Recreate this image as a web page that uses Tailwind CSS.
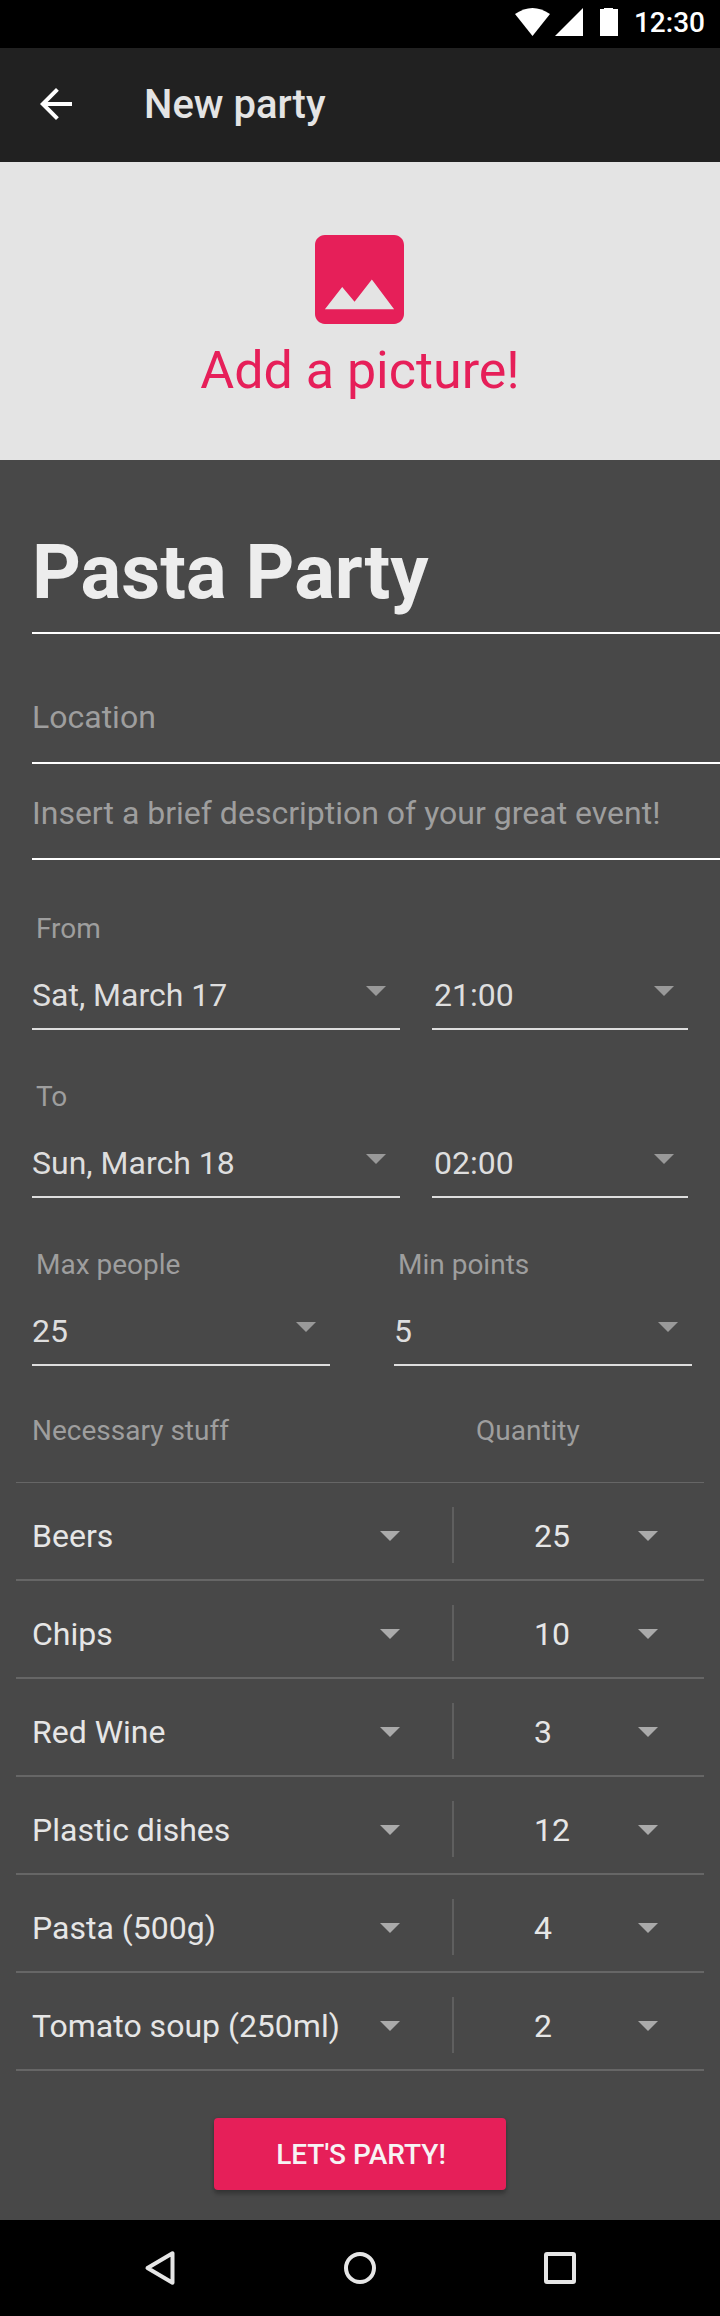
<!DOCTYPE html>
<html lang="en">
<head>
<meta charset="utf-8">
<title>New party</title>
<script src="https://cdn.jsdelivr.net/npm/@tailwindcss/browser@4"></script>
</head>
<body class="w-[720px] bg-[#484848] font-['Roboto',sans-serif] text-[32px] leading-8 text-[#e6e6e6]">
<svg class="hidden"><symbol id="caret" viewBox="0 0 20 10"><path d="M0 0H20L10 10Z" fill="currentColor"/></symbol></svg>

<div class="flex h-12 items-start justify-end bg-black pr-[15px] text-white">
  <svg class="mr-px h-12 w-[118px]" viewBox="0 0 118 48" fill="currentColor"><path d="M0 14Q17.500 2 35 14L17.500 36Z"/><path d="M68 8V36H40Z"/><path d="M85 9H89V8H98V9H103V36H85Z"/></svg>
  <span class="mt-[9px] text-[28px] leading-7 font-medium">12:30</span>
</div>

<header class="flex h-[114px] items-center bg-[#212121] pb-[2px] pl-8">
  <svg class="size-12" viewBox="0 0 24 24" fill="#fff"><path d="M20 11H7.830l5.590-5.590L12 4l-8 8 8 8 1.410-1.410L7.830 13H20v-2z"/></svg>
  <h1 class="mt-[2px] ml-16 text-[40px] leading-10 font-medium text-[#e4e4e4]">New party</h1>
</header>

<section class="flex h-[298px] flex-col items-center bg-[#e4e4e4] pt-[73px] text-[#e61f59]">
  <svg class="mr-px size-[89px]" viewBox="3 3 18 18" fill="currentColor"><path d="M21 19V5c0-1.100-.9-2-2-2H5c-1.100 0-2 .9-2 2v14c0 1.100.9 2 2 2h14c1.100 0 2-.9 2-2zM8.500 13.500l2.500 3.010L14.500 12l4.500 6H5l3.500-4.500z"/></svg>
  <p class="mt-[21px] text-[52px] leading-[52px]">Add a picture!</p>
</section>

<main>
  <div class="ml-8 flex h-[174px] items-end border-b-2 border-white pb-[22px] text-[76px] leading-[76px] font-bold text-[#ededed]">Pasta Party</div>
  <div class="ml-8 flex h-[130px] items-end border-b-2 border-white pb-[29px] text-[#9e9e9e]">Location</div>
  <div class="ml-8 flex h-24 items-end border-b-2 border-white pb-[29px] text-[#9e9e9e]">Insert a brief description of your great event!</div>

  <div class="h-[170px] px-8 pt-[55px]">
    <div class="pl-1 text-[28px] leading-7 text-[#9e9e9e]">From</div>
    <div class="flex h-[87px] gap-8 text-[#dedede]">
      <div class="flex w-[368px] items-end justify-between border-b-2 border-[#dedede] pr-[14px] pb-[17px]">Sat, March 17<svg class="mb-[15px] h-[10px] w-5 text-[#999]"><use href="#caret"/></svg></div>
      <div class="flex w-[256px] items-end justify-between border-b-2 border-[#dedede] pr-[14px] pb-[17px] pl-[2px]">21:00<svg class="mb-[15px] h-[10px] w-5 text-[#999]"><use href="#caret"/></svg></div>
    </div>
  </div>

  <div class="h-[168px] px-8 pt-[53px]">
    <div class="pl-1 text-[28px] leading-7 text-[#9e9e9e]">To</div>
    <div class="flex h-[87px] gap-8 text-[#dedede]">
      <div class="flex w-[368px] items-end justify-between border-b-2 border-[#dedede] pr-[14px] pb-[17px]">Sun, March 18<svg class="mb-[15px] h-[10px] w-5 text-[#999]"><use href="#caret"/></svg></div>
      <div class="flex w-[256px] items-end justify-between border-b-2 border-[#dedede] pr-[14px] pb-[17px] pl-[2px]">02:00<svg class="mb-[15px] h-[10px] w-5 text-[#999]"><use href="#caret"/></svg></div>
    </div>
  </div>

  <div class="flex h-[168px] gap-16 pt-[53px] pl-8">
    <div class="w-[298px]">
      <div class="pl-1 text-[28px] leading-7 text-[#9e9e9e]">Max people</div>
      <div class="flex h-[87px] items-end justify-between border-b-2 border-[#dedede] pr-[14px] pb-[17px] text-[#dedede]">25<svg class="mb-[15px] h-[10px] w-5 text-[#999]"><use href="#caret"/></svg></div>
    </div>
    <div class="w-[298px]">
      <div class="pl-1 text-[28px] leading-7 text-[#9e9e9e]">Min points</div>
      <div class="flex h-[87px] items-end justify-between border-b-2 border-[#dedede] pr-[14px] pb-[17px] text-[#dedede]">5<svg class="mb-[15px] h-[10px] w-5 text-[#999]"><use href="#caret"/></svg></div>
    </div>
  </div>

  <div class="mx-4">
    <div class="flex h-[117px] border-b border-[#666] pt-[51px] pl-4 text-[28px] leading-7 text-[#9e9e9e]"><span class="w-[444px]">Necessary stuff</span><span>Quantity</span></div>

    <div class="flex h-[98px] items-center border-b-2 border-[#666] pt-[10px] pl-4">
      <span class="w-[348px]">Beers</span><svg class="h-[10px] w-5 text-[#aaa]"><use href="#caret"/></svg>
      <i class="mb-[2px] ml-[52px] h-14 w-[2px] bg-[#5f5f5f]"></i>
      <span class="ml-[80px] w-[104px]">25</span><svg class="h-[10px] w-5 text-[#aaa]"><use href="#caret"/></svg>
    </div>
    <div class="flex h-[98px] items-center border-b-2 border-[#666] pt-[10px] pl-4">
      <span class="w-[348px]">Chips</span><svg class="h-[10px] w-5 text-[#aaa]"><use href="#caret"/></svg>
      <i class="mb-[2px] ml-[52px] h-14 w-[2px] bg-[#5f5f5f]"></i>
      <span class="ml-[80px] w-[104px]">10</span><svg class="h-[10px] w-5 text-[#aaa]"><use href="#caret"/></svg>
    </div>
    <div class="flex h-[98px] items-center border-b-2 border-[#666] pt-[10px] pl-4">
      <span class="w-[348px]">Red Wine</span><svg class="h-[10px] w-5 text-[#aaa]"><use href="#caret"/></svg>
      <i class="mb-[2px] ml-[52px] h-14 w-[2px] bg-[#5f5f5f]"></i>
      <span class="ml-[80px] w-[104px]">3</span><svg class="h-[10px] w-5 text-[#aaa]"><use href="#caret"/></svg>
    </div>
    <div class="flex h-[98px] items-center border-b-2 border-[#666] pt-[10px] pl-4">
      <span class="w-[348px]">Plastic dishes</span><svg class="h-[10px] w-5 text-[#aaa]"><use href="#caret"/></svg>
      <i class="mb-[2px] ml-[52px] h-14 w-[2px] bg-[#5f5f5f]"></i>
      <span class="ml-[80px] w-[104px]">12</span><svg class="h-[10px] w-5 text-[#aaa]"><use href="#caret"/></svg>
    </div>
    <div class="flex h-[98px] items-center border-b-2 border-[#666] pt-[10px] pl-4">
      <span class="w-[348px]">Pasta (500g)</span><svg class="h-[10px] w-5 text-[#aaa]"><use href="#caret"/></svg>
      <i class="mb-[2px] ml-[52px] h-14 w-[2px] bg-[#5f5f5f]"></i>
      <span class="ml-[80px] w-[104px]">4</span><svg class="h-[10px] w-5 text-[#aaa]"><use href="#caret"/></svg>
    </div>
    <div class="flex h-[98px] items-center border-b-2 border-[#666] pt-[10px] pl-4">
      <span class="w-[348px]">Tomato soup (250ml)</span><svg class="h-[10px] w-5 text-[#aaa]"><use href="#caret"/></svg>
      <i class="mb-[2px] ml-[52px] h-14 w-[2px] bg-[#5f5f5f]"></i>
      <span class="ml-[80px] w-[104px]">2</span><svg class="h-[10px] w-5 text-[#aaa]"><use href="#caret"/></svg>
    </div>
  </div>

  <div class="flex h-[149px] justify-center pt-[47px]">
    <button class="h-[72px] w-[292px] rounded-[4px] bg-[#e61f59] pt-[2px] pl-[2px] text-[28px] leading-7 font-medium text-[#f7f3f4] shadow-[0_4px_4px_rgba(0,0,0,0.24),0_0_4px_rgba(0,0,0,0.12)]">LET'S PARTY!</button>
  </div>
</main>

<nav class="flex h-24 items-center justify-center gap-[152px] bg-black">
  <svg class="size-12" viewBox="0 0 48 48" fill="none" stroke="#e6e6e6" stroke-width="4" stroke-linejoin="round"><path d="M36.500 9.300V38.700L11.500 24Z"/></svg>
  <svg class="size-12" viewBox="0 0 48 48" fill="none" stroke="#e6e6e6" stroke-width="4"><circle cx="24" cy="24" r="14"/></svg>
  <svg class="size-12" viewBox="0 0 48 48" fill="none" stroke="#e6e6e6" stroke-width="4"><rect x="10" y="10" width="28" height="28" rx="1"/></svg>
</nav>
</body>
</html>
